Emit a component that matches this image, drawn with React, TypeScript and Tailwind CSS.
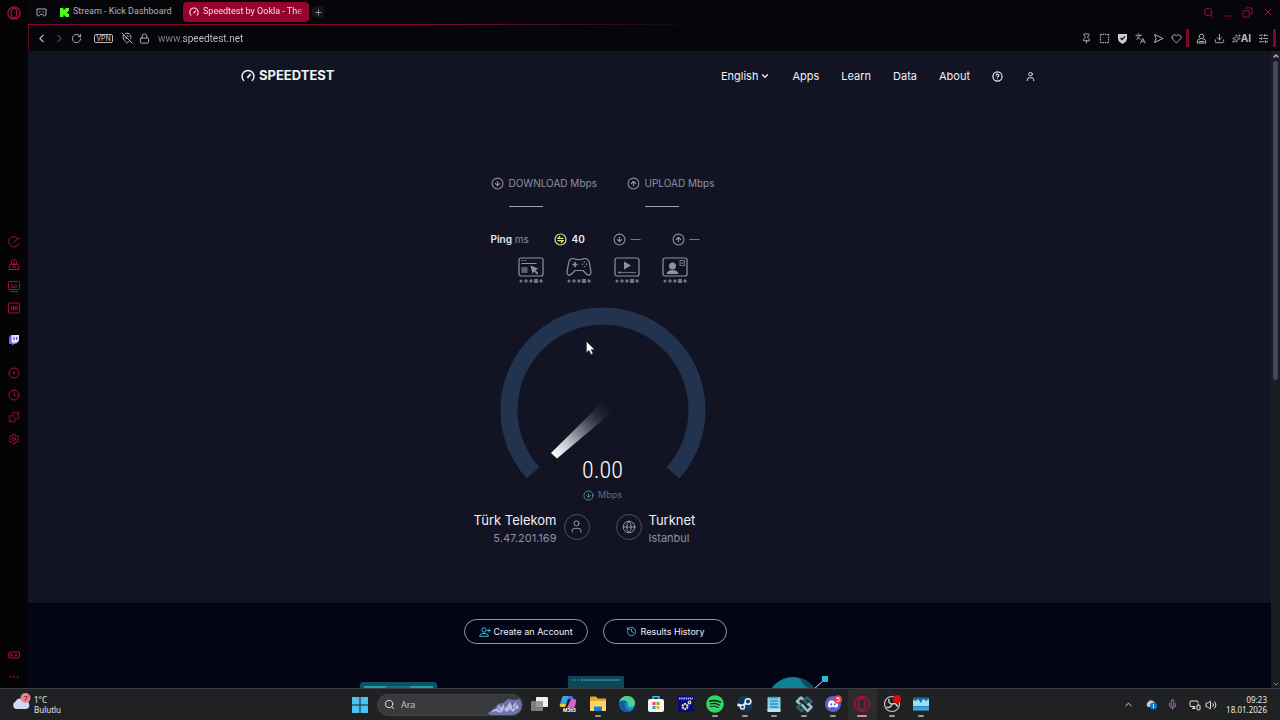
import type { ReactNode } from "react";
import {
  ChevronDown,
  ChevronLeft,
  ChevronRight,
  ChevronUp,
  CircleArrowDown,
  CircleArrowUp,
  CircleHelp,
  Clock,
  Copy,
  Download,
  Ellipsis,
  Globe,
  Heart,
  History,
  Languages,
  Lock,
  MapPinOff,
  Mic,
  Minus,
  MonitorSmartphone,
  Pin,
  Plus,
  Puzzle,
  RotateCw,
  Search,
  Settings,
  SlidersHorizontal,
  Sparkles,
  SquareDashed,
  User,
  Volume2,
  X,
} from "lucide-react";
import { FaDiscord, FaSpotify } from "react-icons/fa6";

const OperaLogo = ({ size = 14 }: { size?: number }) => (
  <svg width={size} height={size} viewBox="0 0 16 16" fill="none" stroke="currentColor">
    <circle cx="8" cy="8" r="7" strokeWidth="1.6" />
    <ellipse cx="8" cy="8" rx="3.2" ry="5.6" strokeWidth="1.4" />
  </svg>
);

const GaugeMark = ({ size = 14 }: { size?: number }) => (
  <svg width={size} height={size} viewBox="0 0 16 16" fill="none" stroke="currentColor" strokeWidth="1.7">
    <path d="M3.6 13.6A6.8 6.8 0 1 1 12.4 13.6" />
    <path d="M7.2 10.2 11 5.8" strokeWidth="2" />
  </svg>
);

const sideTop = [
  {
    label: "Speed Dial",
    icon: (
      <>
        <path d="M10.5 3A5.2 5.2 0 1 0 12 8" />
        <path d="M6.5 7.5 11 3.5h2" />
      </>
    ),
  },
  {
    label: "GX Mods",
    icon: (
      <>
        <path d="M4.5 7.5V4L7 1.8 9.5 4v3.5zM2 12.5l1-5h8l1 5z" />
        <path d="M5 10h4M7 4.5v5" />
      </>
    ),
  },
  {
    label: "GX Control",
    icon: (
      <>
        <rect x="1.5" y="2.5" width="11" height="8" rx="1" />
        <path d="M3 12.5h8M4 5l2.5 3M8 5l2.5 3M4 8h6" />
      </>
    ),
  },
  {
    label: "GX Corner",
    icon: (
      <>
        <rect x="1.5" y="2" width="11" height="10" rx="1" />
        <path d="M4.5 9.5v-4h2v4M8 9.5v-4h2v4M6 7.5h3" />
      </>
    ),
  },
];

const latencyScenes: { label: string; icon: ReactNode }[] = [
  {
    label: "Web browsing",
    icon: (
      <>
        <rect x="1" y="1" width="24" height="18" rx="2" />
        <path d="M3.5 3.5h1.5M6.5 3.5h1.5M3.5 6.5h15" />
        <rect x="3.5" y="10" width="6" height="6" fill="currentColor" stroke="none" opacity=".6" />
        <path d="M12.5 8.5l8 3.3-3.2 1.2 3 3.2-1.4 1.2-2.8-3.2-1.5 2.8z" fill="currentColor" stroke="none" />
      </>
    ),
  },
  {
    label: "Gaming",
    icon: (
      <>
        <path d="M7 1.5c2 0 2.500 1 4 1h4c1.500 0 2-1 4-1 3 0 4 2 4.500 5l1.500 8.500c.3 3-2.500 4-4.500 2L17 13.500H9L5.500 17c-2 2-4.800 1-4.500-2L2.500 6.500C3 3.500 4 1.500 7 1.500z" />
        <path d="M9 5v5M6.500 7.500h5" strokeWidth="1.6" />
        <path d="M18.500 4.500v1M18.500 9v1M16 7.200h1M20 7.200h1" strokeWidth="1.6" />
      </>
    ),
  },
  {
    label: "Video streaming",
    icon: (
      <>
        <rect x="1" y="1" width="24" height="18" rx="2" />
        <path d="M10 4.500v8l7-4z" fill="currentColor" stroke="none" />
        <path d="M4 15.500h18" opacity=".7" />
        <circle cx="5.500" cy="15.500" r="1" fill="currentColor" stroke="none" />
      </>
    ),
  },
  {
    label: "Video chat",
    icon: (
      <>
        <rect x="1" y="1" width="24" height="18" rx="2" />
        <circle cx="10.500" cy="9" r="3.500" fill="currentColor" stroke="none" />
        <path d="M4.500 17c.5-3 3-4 6-4s5.500 1 6 4z" fill="currentColor" stroke="none" />
        <rect x="18" y="3.500" width="4.500" height="5" strokeWidth="1" opacity=".7" />
        <path d="M18.500 6h3.500" strokeWidth=".8" />
      </>
    ),
  },
];

const taskbarApps: { label: string; running?: boolean; active?: boolean; icon: ReactNode }[] = [
  {
    label: "Task view",
    icon: (
      <>
        <rect x="6" y="2" width="12" height="10" rx="1" fill="#f1f1f1" />
        <rect x="1" y="6" width="12" height="10" rx="1" fill="#8d8d8d" opacity=".85" />
      </>
    ),
  },
  {
    label: "Microsoft 365",
    icon: (
      <>
        <path d="M5 1h5L6 12H2c-1.500 0-1.500-2-1-3l2-6c.5-1.500 1-2 2-2z" fill="#2fa8e8" />
        <path d="M1 9h6l-1 3H3c-2 0-2.500-1-2-3z" fill="#f5c335" />
        <path d="M9 1h3c2 0 2 1 2.500 3H9z" fill="#4a6ff0" />
        <path d="M12 4h3c2 0 2.500 1 2 3l-1 4c-.5 1.500-1 2-3 2H8z" fill="#d763c8" />
        <text x="4" y="17" fontSize="5" fontWeight="700" fill="#fff" fontFamily="Roboto, sans-serif">
          M365
        </text>
      </>
    ),
  },
  {
    label: "File Explorer",
    running: true,
    icon: (
      <>
        <path d="M1 3c0-1 .5-1.500 1.500-1.500H7l2 2h7c1 0 1 .5 1 1.500v10H1z" fill="#e9a824" />
        <path d="M1 6h16v9c0 1-.5 1-1 1H2c-.7 0-1-.3-1-1z" fill="#fbd56a" />
        <path d="M5 11.500h8V16H5z" fill="#1684c7" />
      </>
    ),
  },
  {
    label: "Edge",
    icon: (
      <>
        <circle cx="9" cy="9" r="8" fill="#1c86d8" />
        <path d="M1.500 6.500C3 2.500 6 1 9 1c5 0 8 3.500 8 7 0 3-2.500 4-5 4-2 0-2.500-1-2-2 .8-2-1-4-3.500-4-2 0-4 .5-5 .500z" fill="#4fd08c" />
        <path d="M1.200 7.500C3 5 7 5 9 7c-3 0-3 5 0 7.500 1.500 1 3.500 1.500 5 .8C9 19 .5 16 1.200 7.500z" fill="#1557a8" />
      </>
    ),
  },
  {
    label: "Microsoft Store",
    icon: (
      <>
        <path d="M6 4V1.800h6V4" fill="none" stroke="#46b4ee" strokeWidth="1.500" />
        <rect x="1" y="4" width="16" height="13" rx="2" fill="#f4f4f4" />
        <path d="M5.500 7h3v3h-3z" fill="#e8502f" />
        <path d="M9.500 7h3v3h-3z" fill="#72b32a" />
        <path d="M5.500 11h3v3h-3z" fill="#2a9fe0" />
        <path d="M9.500 11h3v3h-3z" fill="#f3b51d" />
      </>
    ),
  },
  {
    label: "Ganyan",
    icon: (
      <>
        <rect x="1" y="1" width="16" height="16" fill="#060a7c" />
        <path d="M2 3.500h14" stroke="#b8bce8" strokeWidth="2" strokeDasharray="1.500 .7" />
        <circle cx="8" cy="11.500" r="2.500" fill="none" stroke="#f4e8a0" strokeWidth="2" strokeDasharray="2 .6" />
        <circle cx="12.500" cy="7.500" r="1.300" fill="none" stroke="#f4e8a0" strokeWidth="1.200" />
      </>
    ),
  },
  { label: "Spotify", running: true, icon: <FaSpotify size={18} color="#2bdc63" /> },
  {
    label: "Steam",
    running: true,
    icon: (
      <>
        <circle cx="9" cy="9" r="8" fill="#12375f" />
        <path d="M1.500 9.500 6.500 11.500 10.500 7" fill="none" stroke="#e8edf3" strokeWidth="2.500" />
        <circle cx="12" cy="6.500" r="2.800" fill="#12375f" stroke="#e8edf3" strokeWidth="1.600" />
        <circle cx="6.500" cy="12" r="2" fill="#12375f" stroke="#e8edf3" strokeWidth="1.400" />
      </>
    ),
  },
  {
    label: "Notepad",
    running: true,
    icon: (
      <>
        <rect x="2.500" y="2" width="13" height="15" rx="1" fill="#7ed4ee" />
        <path d="M2.500 14h13v2c0 .7-.4 1-1 1h-11c-.6 0-1-.3-1-1z" fill="#c9dfe5" />
        <path d="M5 6h8M5 9h8M5 12h8" stroke="#17688d" strokeWidth="1.200" />
        <path d="M4 2.500h10" stroke="#1d7ba4" strokeWidth="2" strokeDasharray="1.500 1" />
      </>
    ),
  },
  {
    label: "Streaming software",
    running: true,
    icon: (
      <g fill="none" strokeWidth="2.600" strokeLinejoin="round">
        <path d="M9.500 5.500 6 2.500 2 6.500 6 10" stroke="#8fc0c6" />
        <path d="M12 8.500l-3-3 3-3 4.500 4-4 4" stroke="#31616d" />
        <path d="M6 9.500l-3.500 3L6.500 16l3.500-3.500" stroke="#31616d" />
        <path d="M6.500 9.500l3 3 3 3.500 4-4-4-3.500" stroke="#8fc0c6" />
      </g>
    ),
  },
  {
    label: "Discord",
    running: true,
    icon: (
      <>
        <circle cx="9" cy="9" r="8" fill="#5b62d8" />
        <svg x="3.500" y="3.500" width="11" height="11">
          <FaDiscord size={11} color="#fff" />
        </svg>
        <circle cx="14" cy="4.500" r="4.300" fill="#d93f4f" />
        <text x="12" y="7" fontSize="7" fill="#fff" fontFamily="Roboto, sans-serif">
          5
        </text>
      </>
    ),
  },
  {
    label: "Opera GX",
    active: true,
    icon: (
      <g fill="none" stroke="#a3113f" strokeWidth="1.600">
        <circle cx="9" cy="9" r="7.500" />
        <ellipse cx="9" cy="9" rx="3.500" ry="6" />
      </g>
    ),
  },
  {
    label: "OBS Studio",
    running: true,
    icon: (
      <>
        <circle cx="9" cy="9" r="7.500" fill="#202020" stroke="#c9c9c9" strokeWidth="1.200" />
        <path d="M6 4c-1 3 1 5 3 5M9 9c3-1 5 0 5.500 3M9 9c-.5 3-3 4-5.500 3" fill="none" stroke="#c9c9c9" strokeWidth="1.500" />
        <circle cx="14" cy="4" r="4" fill="#e3060d" />
      </>
    ),
  },
  {
    label: "Task Manager",
    running: true,
    icon: (
      <>
        <rect x="1" y="2.500" width="16" height="13" rx="1" fill="#1b6d9e" />
        <path d="M1 5l3 1 2-2 3 4 2-4 3 2 3-2v7H1z" fill="#9be0f7" />
        <path d="M1 11.500h16v4H1z" fill="#36a7d8" />
      </>
    ),
  },
];

function Sidebar() {
  const item = "flex h-[22px] w-full items-center justify-center";
  return (
    <aside className="flex w-7 shrink-0 flex-col bg-[#040407] text-[#a51136]">
      <button aria-label="Opera menu" className="flex h-[25px] w-full items-center justify-center">
        <OperaLogo />
      </button>
      <div className="mt-[206px]">
        {sideTop.map((s) => (
          <button key={s.label} aria-label={s.label} className={item}>
            <svg width="14" height="14" viewBox="0 0 14 14" fill="none" stroke="currentColor" strokeWidth="1">
              {s.icon}
            </svg>
          </button>
        ))}
      </div>
      <button aria-label="Twitch" className={`${item} mt-2.5`}>
        <svg width="12" height="12" viewBox="0 0 12 12">
          <path d="M1 3l2-2h8v6L8 10H6l-2 2v-2H1z" fill="#7a5be0" />
          <path d="M3.500 1H11v5.500L9 8.500H7L5.500 10V8.500h-2z" fill="#e6dfff" />
          <path d="M6 3v3M8.700 3v3" stroke="#5a3cc0" strokeWidth="1.100" />
        </svg>
      </button>
      <div className="mt-[11px]">
        <button aria-label="Player" className={item}>
          <svg width="12" height="12" viewBox="0 0 12 12" fill="none" stroke="currentColor">
            <circle cx="6" cy="6" r="5" />
            <path d="M5 4.500v3L7.500 6z" fill="currentColor" stroke="none" />
          </svg>
        </button>
        <button aria-label="History" className={item}>
          <Clock size={12} strokeWidth={2} />
        </button>
        <button aria-label="Extensions" className={item}>
          <Puzzle size={12} strokeWidth={2} />
        </button>
        <button aria-label="Settings" className={item}>
          <Settings size={12} strokeWidth={2} />
        </button>
      </div>
      <div className="mt-auto">
        <button aria-label="GX profile" className={item}>
          <svg width="12" height="8" viewBox="0 0 12 8" fill="none" stroke="currentColor">
            <rect x=".5" y="1" width="11" height="6" rx="1" />
            <path d="M4.500 3h-2v2h2V4M6.500 3l3 2.500M9.500 3l-3 2.500" />
          </svg>
        </button>
        <button aria-label="More" className={item}>
          <Ellipsis size={12} />
        </button>
      </div>
    </aside>
  );
}

function TabBar() {
  return (
    <div className="flex h-6 items-center bg-[#060509] font-['Roboto',sans-serif] text-[9px] text-[#b4b2bb]">
      <button aria-label="Workspace" className="flex w-[26px] justify-center">
        <svg width="11" height="9" viewBox="0 0 11 9" fill="none" stroke="currentColor">
          <path d="M1 7V1h9v6l-1.500 1-2-1.500h-2L2.500 8z" />
          <path d="M3 4h1.500M6.500 4H8" />
        </svg>
      </button>
      <a href="#kick" className="ml-1.5 flex w-[109px] items-center gap-1">
        <svg width="9" height="9" viewBox="0 0 9 9" fill="#53fc18" className="shrink-0">
          <path d="M0 0h3.500v2h1V1h1V0H9v3H8v1H7v1h1v1h1v3H5.500V8h-1V7h-1v2H0z" />
        </svg>
        <span className="whitespace-nowrap">Stream - Kick Dashboard</span>
      </a>
      <a
        href="#speedtest"
        className="ml-3.5 flex h-5 w-[126px] items-center gap-1 rounded-sm bg-[#97032f] pl-1.5 text-[#f3dbe4]"
      >
        <GaugeMark size={10} />
        <span className="mask-r-from-90% pr-1 whitespace-nowrap">Speedtest by Ookla - The</span>
      </a>
      <button aria-label="New tab" className="ml-[3px] flex size-3 items-center justify-center rounded-sm bg-[#17151c]">
        <Plus size={9} />
      </button>
      <div className="mr-1.5 ml-auto flex items-center gap-[9px] text-[#b00d3c]">
        <button aria-label="Search tabs">
          <Search size={11} />
        </button>
        <button aria-label="Minimize" className="pt-2">
          <Minus size={10} />
        </button>
        <button aria-label="Restore">
          <Copy size={11} className="-scale-x-100" />
        </button>
        <button aria-label="Close">
          <X size={12} />
        </button>
      </div>
    </div>
  );
}

function AddressBar() {
  return (
    <div className="flex h-[26px] items-center border-l border-[#5a0a26] bg-[#060509] pr-1 pl-1.5 text-[#b7b5be]">
      <div className="flex items-center">
        <button aria-label="Back" className="w-[18px]">
          <ChevronLeft size={13} />
        </button>
        <button aria-label="Forward" className="w-[18px] text-[#4c4a53]">
          <ChevronRight size={13} />
        </button>
        <button aria-label="Reload" className="w-[23px]">
          <RotateCw size={11} />
        </button>
        <button className="h-[9px] w-[19px] rounded-xs border border-[#b7b5be] text-[7px] leading-[7px] font-medium">VPN</button>
        <button aria-label="Location blocked" className="ml-2">
          <MapPinOff size={12} />
        </button>
        <button aria-label="Connection info" className="ml-1.5">
          <Lock size={11} />
        </button>
      </div>
      <input
        aria-label="Address"
        defaultValue="www.speedtest.net"
        className="ml-2 min-w-0 flex-1 bg-[linear-gradient(90deg,#85838d_24px,#c5c3cd_24px)] bg-clip-text font-['Roboto',sans-serif] text-[10px] text-transparent outline-none"
      />
      <div className="flex items-center gap-[7px]">
        <Pin size={11} />
        <SquareDashed size={11} strokeWidth={2.5} />
        <svg width="11" height="11" viewBox="0 0 11 11">
          <path d="M1 1h9v4.500C10 8 8 9.500 5.500 11 3 9.500 1 8 1 5.500z" fill="#cfc9dc" />
          <path d="M3.500 5l1.500 1.500L8 3.500" fill="none" stroke="#15131b" strokeWidth="1.300" />
        </svg>
        <Languages size={11} />
        <svg width="11" height="11" viewBox="0 0 11 11" fill="none" stroke="currentColor" strokeLinejoin="round">
          <path d="M1.500 1.500 10 5.500 1.500 9.500 3 5.500z" />
        </svg>
        <Heart size={11} />
      </div>
      <span className="mr-1.5 ml-1 h-[18px] w-[3px] bg-[#7a0a2c]" />
      <div className="flex items-center gap-[7px] pl-px">
        <svg width="11" height="11" viewBox="0 0 11 11" fill="none" stroke="currentColor">
          <circle cx="5.500" cy="3.500" r="2.300" />
          <path d="M3.500 6.500H2L1 10h9L9 6.500H7.500M3 8.500h5" />
        </svg>
        <Download size={11} />
        <button className="flex items-center text-[10px] leading-3 font-bold">
          <Sparkles size={9} />
          AI
        </button>
        <SlidersHorizontal size={11} />
      </div>
      <span className="ml-1 h-[18px] w-[3px] bg-[#7a0a2c]" />
    </div>
  );
}

function SiteHeader() {
  return (
    <div className="pr-[22px]">
      <header className="mx-auto flex h-[50px] max-w-[795px] items-center justify-between text-[#f0f0f5]">
        <a href="#home" className="flex items-center gap-1 text-[13px] font-bold">
          <GaugeMark />
          SPEEDTEST
        </a>
        <nav className="flex items-center gap-[22px] text-[11px]">
          <label className="flex items-center">
            <select aria-label="Language" className="field-sizing-content appearance-none bg-transparent outline-none">
              <option>English</option>
            </select>
            <ChevronDown size={10} strokeWidth={3} className="ml-0.5" />
          </label>
          <a href="#apps">Apps</a>
          <a href="#learn">Learn</a>
          <a href="#data">Data</a>
          <a href="#about">About</a>
          <button aria-label="Help">
            <CircleHelp size={11} strokeWidth={2.5} />
          </button>
          <button aria-label="Account">
            <User size={11} />
          </button>
        </nav>
      </header>
    </div>
  );
}

function Gauge() {
  return (
    <div className="relative mt-[22px] grid w-[206px] justify-items-center">
      <svg className="col-start-1 row-start-1" width="206" height="173" viewBox="0 0 206 173">
        <defs>
          <linearGradient id="needle" gradientUnits="userSpaceOnUse" x1="54" y1="149" x2="108" y2="99">
            <stop offset="0" stopColor="#fff" />
            <stop offset=".25" stopColor="#c5c6cf" />
            <stop offset=".7" stopColor="#444b60" stopOpacity=".8" />
            <stop offset="1" stopColor="#202a42" stopOpacity="0" />
          </linearGradient>
        </defs>
        <path d="M33.100 165.900A94 94 0 1 1 172.900 165.900" fill="none" stroke="#22334f" strokeWidth="17" />
        <path d="M51 146l6 5.500 57-48-9-11z" fill="url(#needle)" />
      </svg>
      <span className="col-start-1 row-start-1 self-end font-['Roboto_Condensed','Liberation_Sans_Narrow','Roboto',sans-serif] text-2xl leading-5 font-light text-white antialiased">
        0.00
      </span>
      <svg className="absolute top-[34px] left-[86px]" width="9" height="14" viewBox="0 0 9 14">
        <path d="M.5.500v11l2.500-2.300L5 13.500l2-.9-2-4.100h3.500z" fill="#fff" stroke="#333" strokeWidth=".5" />
      </svg>
    </div>
  );
}

function TestPanel() {
  return (
    <main className="flex flex-col items-center pt-[72px] pr-[94px] pb-14">
      <div className="grid w-[224px] grid-cols-[136px_88px] text-[10px] leading-5 whitespace-nowrap text-[#8f90a5]">
        <div className="flex items-center gap-[5px]">
          <CircleArrowDown size={13} className="shrink-0" />
          DOWNLOAD Mbps
        </div>
        <div className="flex items-center gap-[5px]">
          <CircleArrowUp size={13} className="shrink-0" />
          UPLOAD Mbps
        </div>
        <span className="mt-[13px] ml-[18px] h-px w-[34px] bg-[#a0a1b2]" />
        <span className="mt-[13px] ml-[18px] h-px w-[34px] bg-[#a0a1b2]" />
      </div>

      <div className="mt-[22px] grid w-[224px] grid-cols-[63px_59px_59px_43px] text-[10px] leading-5 text-[#8f90a5]">
        <span>
          <b className="font-semibold text-[#e8e8f0]">Ping</b> ms
        </span>
        <span className="flex items-center gap-[5px] font-semibold text-[#e8e8f0]">
          <svg width="13" height="13" viewBox="0 0 13 13" fill="none" stroke="#e5e28b" strokeWidth="1.200">
            <circle cx="6.500" cy="6.500" r="5.500" />
            <path d="M9.500 5.300H4L6 3.200M3.500 7.700H9L7 9.800" />
          </svg>
          40
        </span>
        <span className="flex items-center gap-[5px]">
          <CircleArrowDown size={13} />—
        </span>
        <span className="flex items-center gap-[5px]">
          <CircleArrowUp size={13} />—
        </span>
      </div>

      <div className="mt-2 flex gap-[22px] text-[#8f90a5]">
        {latencyScenes.map((s) => (
          <svg key={s.label} aria-label={s.label} width="26" height="28" viewBox="0 0 26 28" fill="none" stroke="currentColor" strokeWidth="1.200">
            {s.icon}
            <g fill="#737489" stroke="none">
              <circle cx="3" cy="24" r="1.500" />
              <circle cx="8" cy="24" r="1.700" />
              <circle cx="13" cy="24" r="1.700" />
              <rect x="16" y="22" width="4" height="4" />
              <circle cx="23" cy="24" r="1.700" />
            </g>
          </svg>
        ))}
      </div>

      <Gauge />

      <div className="mt-[7px] flex items-center gap-1 text-[9px] leading-4 text-[#65667b]">
        <CircleArrowDown size={11} className="text-[#3f9c9f]" />
        Mbps
      </div>

      <div className="mt-[7px] grid grid-cols-2 gap-[26px]">
        <div className="flex items-center justify-end gap-[7px] text-right">
          <div>
            <p className="text-[13px] leading-5 text-[#f0f0f5]">Türk Telekom</p>
            <p className="text-[11px] leading-[17px] text-[#8f90a5]">5.47.201.169</p>
          </div>
          <span className="mb-1 flex size-[26px] items-center justify-center rounded-full border border-[#4d4e61] text-[#a0a1b2]">
            <User size={15} strokeWidth={1.5} />
          </span>
        </div>
        <div className="flex items-center gap-[7px]">
          <span className="mb-1 flex size-[26px] items-center justify-center rounded-full border border-[#4d4e61] text-[#a0a1b2]">
            <Globe size={14} strokeWidth={1.5} />
          </span>
          <div>
            <p className="text-[13px] leading-5 text-[#f0f0f5]">Turknet</p>
            <p className="text-[11px] leading-[17px] text-[#8f90a5]">Istanbul</p>
          </div>
        </div>
      </div>
    </main>
  );
}

function AccountStrip() {
  const pill =
    "flex h-[25px] w-[124px] items-center justify-center gap-0.5 rounded-full border border-[#9596ab] text-[9px] text-[#f0f0f5]";
  return (
    <section className="min-h-0 flex-1 overflow-hidden bg-[#030517] pt-4 pr-[108px]">
      <div className="flex justify-center gap-[15px]">
        <button className={pill}>
          <svg width="12" height="10" viewBox="0 0 12 10" fill="none" stroke="#35b8d0">
            <circle cx="5" cy="3" r="2.200" />
            <path d="M.7 9.300c0-2 1.500-2.800 4.300-2.800s4.300.8 4.300 2.800zM10 1.500v4M8 3.500h4" />
          </svg>
          Create an Account
        </button>
        <button className={pill}>
          <History size={11} className="mr-0.5 text-[#35c5d0]" />
          Results History
        </button>
      </div>
      <div className="mx-auto mt-8 grid max-w-[591px] grid-cols-3 justify-items-center">
        <svg className="mt-1.5" width="77" height="50" viewBox="0 0 77 50">
          <rect width="77" height="50" rx="3" fill="#0d5260" />
          <path d="M4 5h69" stroke="#1e9db0" strokeWidth="2" />
          <path d="M26 5h24" stroke="#0b3f50" strokeWidth="1" />
        </svg>
        <svg width="56" height="50" viewBox="0 0 56 50">
          <rect width="56" height="50" rx="1" fill="#0e4655" />
          <path d="M3 4h8" stroke="#2695a8" strokeDasharray="2 1" />
          <path d="M13 4h39" stroke="#2fa7ba" />
        </svg>
        <svg width="72" height="60" viewBox="0 0 72 60">
          <circle cx="36" cy="27" r="26" fill="#0e8195" />
          <path d="M42 2a26 26 0 0 1 18 16L48 10z" fill="#0b4b5e" />
          <path d="M56 14 67 4" stroke="#e7eef2" />
          <rect x="65" y="0" width="6" height="6" fill="#2bbbe0" />
        </svg>
      </div>
    </section>
  );
}

function Scrollbar() {
  return (
    <div className="flex w-[9px] shrink-0 flex-col items-center bg-[#1b1c24] text-[#b7b8c0]">
      <ChevronUp size={8} strokeWidth={4} className="my-px" />
      <div className="h-[319px] w-[5px] rounded-full bg-[#454957]" />
      <ChevronDown size={8} strokeWidth={3} className="mt-auto text-[#777985]" />
    </div>
  );
}

function Taskbar() {
  return (
    <footer className="grid h-8 shrink-0 grid-cols-[1fr_auto_1fr] items-center border-t border-[#3d3e45] bg-[#202122] font-['Noto_Sans',sans-serif] text-[8px] leading-[10px] text-[#e6e6e6]">
      <button className="flex items-center gap-[3px] pl-3 text-left">
        <svg width="19" height="18" viewBox="0 0 19 18" className="mb-1.5">
          <path d="M4 16a4 4 0 0 1-.5-7.500A5 5 0 0 1 12.500 8 4 4 0 0 1 14 16z" fill="#cfd9f2" />
          <circle cx="13.500" cy="5" r="5" fill="#ee8193" />
          <text x="11.800" y="7.500" fontSize="7" fill="#3a0f18" fontFamily="Roboto, sans-serif">
            7
          </text>
        </svg>
        <span>
          1°C
          <br />
          Bulutlu
        </span>
      </button>

      <div className="flex items-center pl-1">
        <button aria-label="Start" className="flex w-6 justify-center">
          <svg width="16" height="16" viewBox="0 0 16 16" fill="#4cc2f1">
            <path d="M0 0h7.500v7.500H0zM8.500 0H16v7.500H8.500zM0 8.500h7.500V16H0zM8.500 8.500H16V16H8.500z" />
          </svg>
        </button>
        <label className="ml-[5px] flex h-[22px] w-[146px] items-center gap-1.5 overflow-hidden rounded-full border border-[#444547] bg-[#393a3c] pl-1.5">
          <Search size={11} className="shrink-0" />
          <input
            aria-label="Ara"
            placeholder="Ara"
            className="min-w-0 flex-1 bg-transparent text-[9px] outline-none placeholder:text-[#c5c5c5]"
          />
          <svg className="shrink-0 self-end" width="34" height="17" viewBox="0 0 34 17">
            <path d="M0 15l6-4 4-5 5-1 5-4 6 1 6-1 2 5-1 7-4 4H2z" fill="#6f73a8" />
            <path d="M3 14l3-3 2 1 3-5 2 3 3-4 2 4 4-6 2 4 4-4 3 6-3 1-3 3-3-3-3 3-3-2-4 3-4-2z" fill="#b9bde4" />
            <path d="M10 9l2 4M17 6l-1 6M24 5l1 6M29 5l-3 6" stroke="#565a90" strokeWidth=".8" />
          </svg>
        </label>
        <div className="ml-px grid w-[412px] grid-cols-14">
          {taskbarApps.map((a) => (
            <button
              key={a.label}
              aria-label={a.label}
              className={`flex h-[31px] flex-col items-center justify-center gap-0.5 pt-0.5 ${a.active ? "rounded-sm bg-[#2c2b2e]" : ""}`}
            >
              <svg width="18" height="18" viewBox="0 0 18 18">
                {a.icon}
              </svg>
              <span
                className={`h-0.5 rounded-full ${a.active ? "w-2.5 bg-[#d38ba2]" : a.running ? "w-1.5 bg-[#9a9a9a]" : "w-1.5"}`}
              />
            </button>
          ))}
        </div>
      </div>

      <div className="flex items-center justify-end pr-[13px]">
        <ChevronUp size={11} />
        <svg className="ml-[11px]" width="12" height="11" viewBox="0 0 12 11">
          <path d="M3 8a3 3 0 0 1 0-5 4 4 0 0 1 7 1v4z" fill="#c3cad1" />
          <circle cx="8.500" cy="7" r="3.500" fill="#1575c4" />
          <path d="M8.500 6.500V9M8.500 5v.8" stroke="#fff" />
        </svg>
        <Mic size={11} className="ml-2.5 text-[#b77fc4]" />
        <MonitorSmartphone size={12} className="ml-[11px]" />
        <Volume2 size={12} className="ml-1" />
        <time className="ml-[9px] text-right">
          09:23
          <br />
          18.01.2026
        </time>
      </div>
    </footer>
  );
}

export default function App() {
  return (
    <div className="flex h-screen flex-col overflow-hidden bg-[#040407] font-['Inter',sans-serif]">
      <div className="flex min-h-0 flex-1">
        <Sidebar />
        <div className="flex min-w-0 flex-1 flex-col">
          <TabBar />
          <div className="h-px shrink-0 bg-linear-to-r from-[#8a0a31] from-30% to-[#060509] to-55%" />
          <AddressBar />
          <div className="flex min-h-0 flex-1">
            <div className="flex min-w-0 flex-1 flex-col">
              <div className="shrink-0 bg-[#131423]">
                <SiteHeader />
                <TestPanel />
              </div>
              <AccountStrip />
            </div>
            <Scrollbar />
          </div>
        </div>
      </div>
      <Taskbar />
    </div>
  );
}
